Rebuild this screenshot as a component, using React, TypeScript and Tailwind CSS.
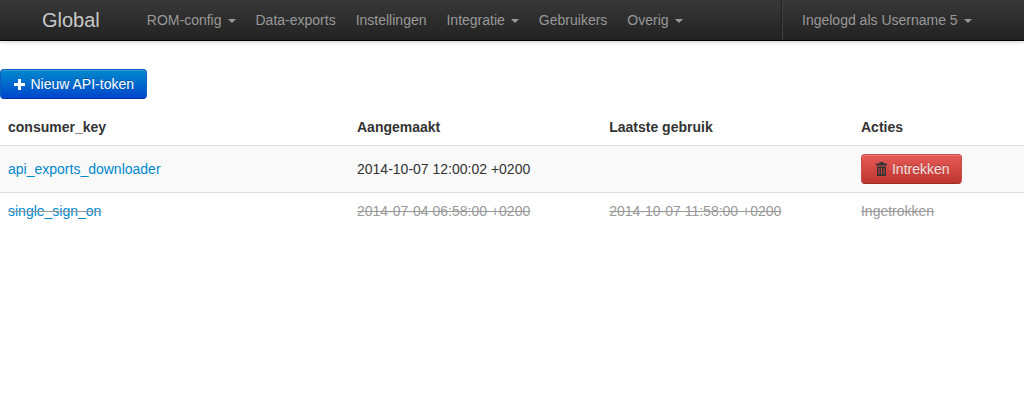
const navItems = [
  { label: 'ROM-config', caret: true },
  { label: 'Data-exports', caret: false },
  { label: 'Instellingen', caret: false },
  { label: 'Integratie', caret: true },
  { label: 'Gebruikers', caret: false },
  { label: 'Overig', caret: true },
]

const Caret = () => <span className="ml-[6px] inline-block h-0 w-0 border-x-[4px] border-t-[4px] border-x-transparent border-t-[#999] align-middle" />

const TrashIcon = () => (
  <svg width="11" height="14" viewBox="0 0 11 14" className="mr-[5px] inline-block align-[-2px]">
    <path fill="#333" fillRule="evenodd" d="M3.5 0h4v1.5H11v2H0v-2h3.5zM1 4.5h9V14H1zM2.5 6v6.5h1V6zM5 6v6.5h1V6zM7.5 6v6.5h1V6z" />
  </svg>
)

const PlusIcon = () => (
  <svg width="11" height="11" viewBox="0 0 11 11" className="mr-[6px] inline-block align-[-1px]">
    <path fill="#fff" d="M4 0h3v4h4v3H7v4H4V7H0V4h4z" />
  </svg>
)

export default function App() {
  return (
    <div className="min-h-[400px] bg-white font-['Liberation_Sans',Arial,sans-serif] text-[14px] leading-[20px] text-[#333]">
      <nav className="flex h-[41px] justify-between border-b border-black bg-gradient-to-b from-[#383838] to-[#222222] shadow-[0_1px_4px_rgba(0,0,0,0.2)]">
        <div className="flex">
          <a className="ml-[42px] mr-[37px] py-[10px] text-[20px] text-[#c8c8c8]">Global</a>
          <ul className="flex">
            {navItems.map((item) => (
              <li key={item.label} className="px-[10px] py-[10px] text-[#999]">
                {item.label}
                {item.caret && <Caret />}
              </li>
            ))}
          </ul>
        </div>
        <div className="flex w-[243px] border-l border-[#222222]">
          <div className="flex-1 border-l border-[#3f3f3f] pl-[19px]">
            <div className="py-[10px] text-[#999]">
              Ingelogd als Username 5
              <Caret />
            </div>
          </div>
        </div>
      </nav>

      <div className="pt-[28px]">
        <button className="ml-0 block h-[30px] w-[147px] rounded-[4px] border border-[#0a5fc0] border-b-[#0036a3] bg-gradient-to-b from-[#0088cc] to-[#0044cc] pl-[13px] text-left text-white shadow-[inset_0_1px_0_rgba(255,255,255,0.2)] [text-shadow:0_-1px_0_rgba(0,0,0,0.25)]">
          <PlusIcon />
          <span className="-ml-[0.5px]">Nieuw API-token</span>
        </button>

        <table className="mt-[10px] w-full table-fixed border-collapse">
          <colgroup>
            <col className="w-[349px]" />
            <col className="w-[252.2px]" />
            <col className="w-[251.8px]" />
            <col />
          </colgroup>
          <thead>
            <tr className="text-left font-bold">
              <th className="p-[8px]">consumer_key</th>
              <th className="p-[8px]">Aangemaakt</th>
              <th className="p-[8px]">Laatste gebruik</th>
              <th className="p-[8px]">Acties</th>
            </tr>
          </thead>
          <tbody>
            <tr className="border-y border-[#dddddd] bg-[#f9f9f9]">
              <td className="p-[8px]">
                <a className="text-[#0088cc]">api_exports_downloader</a>
              </td>
              <td className="p-[8px]">2014-10-07 12:00:02 +0200</td>
              <td className="p-[8px]"></td>
              <td className="p-[8px]">
                <button className="block h-[30px] w-[101px] rounded-[4px] border border-[#c9504c] border-b-[#9c2d27] bg-gradient-to-b from-[#e85a56] to-[#bd362f] pl-[14px] text-left text-white/85 shadow-[inset_0_1px_0_rgba(255,255,255,0.2)] [text-shadow:0_-1px_0_rgba(0,0,0,0.25)]">
                  <TrashIcon />
                  Intrekken
                </button>
              </td>
            </tr>
            <tr className="text-[#999] line-through">
              <td className="p-[8px]">
                <a className="text-[#0088cc]">single_sign_on</a>
              </td>
              <td className="p-[8px]">2014-07-04 06:58:00 +0200</td>
              <td className="p-[8px]">2014-10-07 11:58:00 +0200</td>
              <td className="p-[8px]">Ingetrokken</td>
            </tr>
          </tbody>
        </table>
      </div>
    </div>
  )
}
